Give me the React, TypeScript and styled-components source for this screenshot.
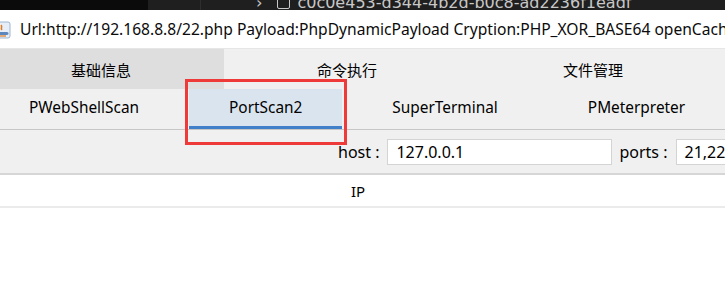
import styled, {createGlobalStyle} from 'styled-components';

const GlobalStyle = createGlobalStyle`
  html, body {
    margin: 0;
    padding: 0;
    overflow: hidden;
    background: #f0f0f0;
  }
  body {
    width: 725px;
    height: 307px;
    font-family: "Noto Sans", "Noto Sans CJK SC", sans-serif;
    color: #000;
  }
`;

const mainTabs = ['基础信息', '命令执行', '文件管理'];
const pluginTabs = ['PWebShellScan', 'PortScan2', 'SuperTerminal', 'PMeterpreter'];

export default function App() {
    return (
        <Page>
            <GlobalStyle/>
            <Editor>
                <EditorShade/>
                <EditorCrumb>
                    <Chevron>›</Chevron>
                    <FileBox/>
                    <span>c0c0e453-d344-4b2d-b0c8-ad2236f1eadf</span>
                </EditorCrumb>
            </Editor>
            <TitleBar>
                <JavaIcon width="12" height="18" viewBox="0 0 12 18">
                    <rect x="-4" y="1" width="14" height="16" rx="2" fill="#e7eef7" stroke="#9fb6d0"/>
                    <path d="M1 4 C3 6 0 7 2 9" stroke="#e07b22" strokeWidth="1.6" fill="none"/>
                    <path d="M-2 11 h9 c2 0 2 3 0 3 h-9 z" fill="#5b87bd"/>
                    <path d="M-2 15 h8" stroke="#e07b22" strokeWidth="1.2"/>
                </JavaIcon>
                <Title>Url:http://192.168.8.8/22.php Payload:PhpDynamicPayload Cryption:PHP_XOR_BASE64 openCache:true</Title>
            </TitleBar>
            <Frame>
                <TabRow>
                    {mainTabs.map((t, i) => (
                        <MainTab key={t} $selected={i === 0}>{t}</MainTab>
                    ))}
                </TabRow>
                <TabRow>
                    {pluginTabs.map((t, i) => (
                        <PluginTab key={t}>
                            <PluginLabel $selected={i === 1}>{t}</PluginLabel>
                        </PluginTab>
                    ))}
                </TabRow>
                <FormRow>
                    <Label>host :</Label>
                    <Field $width={225} defaultValue="127.0.0.1"/>
                    <Label>ports :</Label>
                    <Field $width={200} defaultValue="21,22,80,443,3306,3389,6379,8080"/>
                </FormRow>
                <TableHeader>
                    <HeaderCell>IP</HeaderCell>
                </TableHeader>
            </Frame>
            <Highlight/>
        </Page>
    );
}

const Page = styled.div`
  position: relative;
  width: 725px;
  height: 307px;
  overflow: hidden;
  background: #fff;
`;

const Editor = styled.div`
  height: 10px;
  background: #1f1f1f;
  display: flex;
  align-items: flex-end;
  overflow: hidden;
`;

const EditorShade = styled.div`
  width: 148px;
  height: 100%;
  background: #0b0b0b;
  border-right: 52px solid #1f1f1f;
  box-shadow: 1px 0 0 #2e2e2e;
  flex: none;
`;

const EditorCrumb = styled.div`
  display: flex;
  align-items: flex-end;
  gap: 7px;
  margin-left: 56px;
  margin-bottom: -3px;
  font-family: "DejaVu Sans", sans-serif;
  font-size: 16px;
  line-height: 20px;
  color: #c8c8c8;
  white-space: nowrap;
`;

const Chevron = styled.span`
  margin-right: 8px;
`;

const FileBox = styled.span`
  width: 13px;
  height: 16px;
  margin-bottom: 4px;
  box-sizing: border-box;
  border: 1.5px solid #c8c8c8;
  border-radius: 2px;
`;

const TitleBar = styled.div`
  height: 38px;
  background: #fff;
  border-bottom: 1px solid #e6e6e6;
  display: flex;
  align-items: center;
  gap: 8px;
  white-space: nowrap;
  overflow: hidden;
`;

const JavaIcon = styled.svg`
  flex: none;
  margin-top: 1px;
`;

const Title = styled.span`
  font-size: 15.6px;
  color: #0b0b0b;
`;

const Frame = styled.div`
  margin-left: -22px;
  width: 760px;
  background: #f0f0f0;
`;

const TabRow = styled.div`
  display: flex;
  height: 40px;
  white-space: nowrap;
`;

const MainTab = styled.div<{ $selected: boolean }>`
  width: 246px;
  flex: none;
  display: flex;
  align-items: center;
  justify-content: center;
  font-size: 15px;
  background: ${({$selected}) => ($selected ? '#dedede' : '#f0f0f0')};
`;

const PluginTab = styled.div`
  flex: none;
  display: flex;
  padding: 0 5px;
  &:first-child {
    margin-left: 6px;
  }
`;

const PluginLabel = styled.div<{ $selected: boolean }>`
  display: flex;
  align-items: center;
  padding: 0 40px;
  font-size: 15.4px;
  background: ${({$selected}) => ($selected ? '#d9e4ee' : 'transparent')};
  border-bottom: 3px solid ${({$selected}) => ($selected ? '#3f80c8' : 'transparent')};
`;

const FormRow = styled.div`
  height: 46px;
  box-sizing: border-box;
  border-top: 1px solid #c6c6c6;
  border-bottom: 2px solid #d6d6d6;
  display: flex;
  align-items: center;
  padding-left: 360px;
  white-space: nowrap;
`;

const Label = styled.span`
  font-size: 16px;
  margin-right: 8px;
`;

const Field = styled.input<{ $width: number }>`
  width: ${({$width}) => $width}px;
  height: 26px;
  box-sizing: border-box;
  border: 1px solid #d4d4d4;
  background: #fff;
  padding: 0 8px;
  margin-right: 7px;
  font-family: "Noto Sans", sans-serif;
  font-size: 16px;
  color: #000;
  outline: none;
`;

const TableHeader = styled.div`
  height: 31px;
  background: #fff;
  border-bottom: 2px solid #ebebeb;
  display: flex;
  align-items: center;
  justify-content: center;
`;

const HeaderCell = styled.span`
  font-size: 15px;
`;

const Highlight = styled.div`
  position: absolute;
  left: 185px;
  top: 79px;
  width: 162px;
  height: 66px;
  box-sizing: border-box;
  border: 3px solid #ef3a3a;
  pointer-events: none;
`;
